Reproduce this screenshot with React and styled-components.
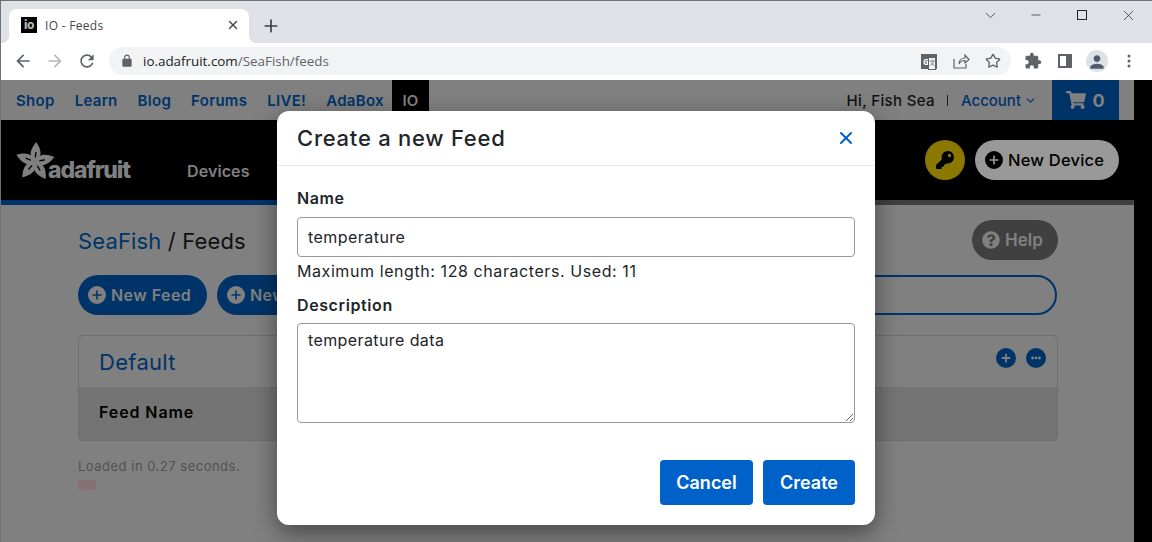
import React from "react";
import styled, { createGlobalStyle } from "styled-components";
import { FaShoppingCart, FaKey, FaQuestionCircle, FaPlus, FaEllipsisH } from "react-icons/fa";
import { X, Plus, Star, ChevronDown, Minus } from "lucide-react";

const UI = `Inter, "Liberation Sans", sans-serif`;
const CHROME = `"Open Sans", "Liberation Sans", sans-serif`;

const Global = createGlobalStyle`
  html, body { margin: 0; padding: 0; background: #000; }
  * { box-sizing: border-box; }
`;

const Win = styled.div`
  width: 1152px; height: 542px; overflow: hidden; display: flex; flex-direction: column;
  border-top: 1px solid #6f7173; border-left: 1px solid #6f7173; font-family: ${UI};
`;
const TabStrip = styled.div`
  height: 42px; flex: none; background: #dee1e6; display: flex; align-items: flex-end; padding-left: 8px; color: #3c4043;
`;
const Tab = styled.div`
  position: relative; width: 240px; height: 34px; background: #fff; border-radius: 8px 8px 0 0;
  display: flex; align-items: center; padding: 0 9px 2px 12px; font: 12px ${CHROME}; color: #45474a;
  &::before, &::after { content: ""; position: absolute; bottom: 0; width: 8px; height: 8px; }
  &::before { left: -8px; background: radial-gradient(circle at 0 0, #dee1e6 8px, #fff 8.5px); }
  &::after { right: -8px; background: radial-gradient(circle at 100% 0, #dee1e6 8px, #fff 8.5px); }
`;
const Favicon = styled.div`
  width: 16px; height: 16px; background: #000; color: #b5b5b5; font: 800 12px/15px ${UI}; text-align: center; margin-right: 8px; letter-spacing: -.5px;
`;
const TabTitle = styled.span`flex: 1; letter-spacing: .3px;`;
const NewTab = styled.div`margin-left: 12px; margin-bottom: 7px; display: flex; width: 20px; height: 20px; color: #3c4043;`;
const WinControls = styled.div`
  margin-left: auto; align-self: flex-start; display: flex; align-items: center; height: 28px; margin-right: 1px; color: #222;
`;
const WinBtn = styled.div`width: 46px; display: flex; justify-content: center; align-items: center;`;
const MaxBox = styled.div`width: 10px; height: 10px; border: 1px solid #222;`;
const Toolbar = styled.div`
  height: 37px; flex: none; background: #fff; display: flex; align-items: center; padding: 0 0 1px 6px;
`;
const NavBtn = styled.div`
  width: 32px; display: flex; justify-content: center; align-items: center; color: ${p => p.$off ? "#b5b7ba" : "#5f6368"};
`;
const Omnibox = styled.div`
  width: 902px; height: 28px; margin-left: 6px; border-radius: 14px; background: #f1f3f4; display: flex; align-items: center;
  padding: 0 2px 0 11px; color: #5f6368;
`;
const Url = styled.div`font: 13.4px ${CHROME}; color: #5f6368; margin-left: 9px; flex: 1;`;
const UrlHost = styled.span`color: #202124;`;
const OmniIcon = styled.div`width: 32px; display: flex; justify-content: center; align-items: center; color: #5f6368;`;
const TranslateBox = styled.div`
  position: relative; width: 16px; height: 15px; background: #5f6368; color: #fff; font: 700 8px/15px ${CHROME}; padding-left: 2px;
`;
const TranslateBack = styled.span`
  position: absolute; left: 7px; top: 3px; width: 8px; height: 13px; background: #f1f3f4; border: 1px solid #5f6368; color: #5f6368; font: 7px/10px ${CHROME}; text-align: center;
`;
const ToolIcons = styled.div`display: flex; align-items: center; margin-left: 6px;`;
const ToolBtn = styled.div`width: 32px; display: flex; justify-content: center; align-items: center; color: #5f6368;`;
const Avatar = styled.div`
  width: 22px; height: 22px; border-radius: 50%; background: #dee1e6; display: flex; align-items: flex-end; justify-content: center; color: #52596a;
`;

const Page = styled.div`position: relative; flex: 1; display: flex; min-height: 0; background: #000;`;
const Main = styled.div`width: 1133px; flex: none; background: #d5d5d5; display: flex; flex-direction: column;`;
const Overlay = styled.div`position: absolute; inset: 0; background: rgba(0,0,0,.4);`;

const TopNav = styled.div`height: 40px; flex: none; display: flex; align-items: center; padding-left: 15px;`;
const NavLink = styled.a`
  font-size: 15px; font-weight: 600; color: #0058b0; margin-right: 20px; letter-spacing: .3px; white-space: nowrap;
`;
const IoTab = styled.div`
  width: 37px; height: 40px; background: #000; color: #d5d5d5; font-size: 15px; font-weight: 600; margin-left: -12px;
  display: flex; align-items: center; justify-content: center;
`;
const TopRight = styled.div`margin-left: auto; display: flex; align-items: center; height: 100%; margin-right: 15px;`;
const Hello = styled.span`font-size: 15px; font-weight: 500; color: #1c1c1c; letter-spacing: .35px;`;
const Sep = styled.span`width: 1px; height: 11px; background: #333; margin: 0 13px 0 12px;`;
const Account = styled.span`font-size: 15px; font-weight: 500; color: #0058b0; display: flex; align-items: center; gap: 3px; margin-right: 15px;`;
const Cart = styled.div`
  width: 67px; height: 40px; background: #0058b0; color: #d5d5d5; display: flex; align-items: center; justify-content: center; gap: 6px;
  font-size: 18px; font-weight: 700;
`;

const Header = styled.div`height: 80px; flex: none; background: #000; display: flex; align-items: center; padding: 0 15px 0 14px;`;
const Logo = styled.div`display: flex; align-items: flex-end; width: 116px; height: 40px; color: #d5d5d5; margin-top: 1px;`;
const LogoText = styled.span`
  font-size: 23px; font-weight: 800; letter-spacing: -1.1px; line-height: 22px; margin-left: -7px; color: #d5d5d5;
`;
const Devices = styled.a`margin-left: 56px; margin-top: 22px; font-size: 16px; font-weight: 600; letter-spacing: .1px; color: #d5d5d5;`;
const HeaderRight = styled.div`margin-left: auto; display: flex; align-items: center; gap: 10px;`;
const KeyBtn = styled.div`
  width: 40px; height: 40px; border-radius: 50%; background: #e6c800; color: #000; display: flex; align-items: center; justify-content: center;
`;
const NewDevice = styled.div`
  width: 144px; height: 40px; border-radius: 20px; background: #fff; color: #000; display: flex; align-items: center; gap: 5px; padding-left: 10px;
  font-size: 16.5px; font-weight: 500; letter-spacing: .2px; white-space: nowrap;
`;
const Stripe = styled.div`height: 5px; flex: none; background: linear-gradient(to right, #0058b0 0 60%, #6b6b6b 60%);`;

const Content = styled.div`flex: 1; padding: 15px 76px 0 77px; display: flex; flex-direction: column;`;
const TitleRow = styled.div`height: 40px; display: flex; align-items: center; justify-content: space-between;`;
const Crumb = styled.h1`margin: 2px 0 0; font-size: 22px; font-weight: 400; color: #1c1c1c; letter-spacing: .15px; white-space: nowrap;`;
const CrumbLink = styled.span`color: #0058b0;`;
const HelpBtn = styled.div`
  width: 86px; height: 40px; border-radius: 20px; background: #6b6b6b; color: #d5d5d5; display: flex; align-items: center; gap: 5px; padding-left: 10px;
  font-size: 17px; font-weight: 600;
`;
const ActionRow = styled.div`margin: 15px 1px 0 0; height: 40px; display: flex; gap: 10px;`;
const PillBtn = styled.div`
  width: 129px; height: 40px; flex: none; overflow: hidden; border-radius: 20px; background: #0058b0; color: #d5d5d5; display: flex; align-items: center; gap: 5px; padding-left: 10px;
  font-size: 16px; font-weight: 600; letter-spacing: .45px; white-space: nowrap;
`;
const Search = styled.div`flex: 1; height: 40px; border: 2px solid #0058b0; border-radius: 20px;`;
const Card = styled.div`margin-top: 20px; border: 1px solid #b9b9b9; border-radius: 4px; height: 106px; display: flex; flex-direction: column;`;
const CardHead = styled.div`height: 51px; display: flex; align-items: center; padding: 0 11px 0 20px; justify-content: space-between;`;
const CardTitle = styled.h2`margin: 0; font-size: 22px; font-weight: 400; letter-spacing: .3px; color: #0058b0;`;
const CardIcons = styled.div`display: flex; gap: 10px; margin-top: -8px;`;
const RoundIcon = styled.div`
  width: 20px; height: 20px; border-radius: 50%; background: #0058b0; color: #d5d5d5; display: flex; align-items: center; justify-content: center;
`;
const CardRow = styled.div`flex: 1; background: #c2c2c2; display: flex; align-items: center; padding: 0 20px 4px; font-size: 16px; font-weight: 600; letter-spacing: .9px; color: #000; border-radius: 0 0 4px 4px;`;
const Loaded = styled.div`margin-top: 17px; font-size: 13px; color: #8a8a8a; letter-spacing: .5px;`;
const Tag = styled.div`margin-top: 6px; width: 18px; height: 10px; border-radius: 2px; background: #e2bcc3;`;

const Modal = styled.div`
  position: absolute; left: 276px; top: 31px; width: 598px; height: 414px; background: #fff; border-radius: 12px;
  box-shadow: 0 8px 24px rgba(0,0,0,.45); display: flex; flex-direction: column; color: #212529;
`;
const ModalHead = styled.div`
  height: 55px; flex: none; border-bottom: 1px solid #e6e6e6; display: flex; align-items: center; justify-content: space-between; padding: 0 19px 0 20px;
`;
const ModalTitle = styled.h3`margin: 0; font-size: 22px; font-weight: 500; letter-spacing: .75px; color: #212529;`;
const Close = styled.div`color: #0062c8; display: flex;`;
const ModalBody = styled.div`padding: 22px 20px 20px; flex: 1; display: flex; flex-direction: column;`;
const Label = styled.label`font-size: 16px; font-weight: 600; line-height: 20px; letter-spacing: .6px; color: #212529;`;
const NameInput = styled.input`
  margin-top: 9px; width: 100%; height: 40px; border: 1px solid #989898; border-radius: 4px; padding: 0 10px; font: 400 16px ${UI}; letter-spacing: .45px; color: #212529; background: #fff; outline: none;
`;
const Hint = styled.div`font-size: 16px; line-height: 20px; margin: 4px 0 14px; letter-spacing: .58px; color: #212529;`;
const DescArea = styled.textarea`
  display: block; margin-top: 8px; width: 100%; height: 100px; border: 1px solid #989898; border-radius: 4px; padding: 6px 10px; font: 400 16px ${UI}; letter-spacing: .4px; color: #212529; background: #fff; outline: none; resize: vertical;
`;
const ModalFoot = styled.div`margin-top: auto; display: flex; justify-content: flex-end; gap: 10px;`;
const Primary = styled.button`
  height: 45px; width: ${p => p.$w}px; border: 0; border-radius: 4px; background: #0062c8; color: #fff; font: 600 18px ${UI}; padding: 0 0 1px;
`;

const Glyph = ({ d, size = 24, ...rest }) => (
  <svg width={size} height={size} viewBox="0 0 24 24" fill="currentColor" {...rest}><path d={d} /></svg>
);
const PlusDisc = ({ size = 18 }) => (
  <svg width={size} height={size} viewBox="0 0 18 18" fill="currentColor">
    <path fillRule="evenodd" d="M9 0a9 9 0 1 1 0 18A9 9 0 0 1 9 0zM8.200 4.500v3.700H4.500v1.600h3.700v3.700h1.600V9.800h3.700V8.200H9.800V4.500z" />
  </svg>
);
const AdafruitStar = () => (
  <svg width="40" height="40" viewBox="-20 -21 40 40" fill="currentColor">
    {[0, 1, 2, 3, 4].map(k => (
      <g key={k} transform={`rotate(${5 + 72 * k})`}>
        <path d="M0 0C-7 -5 -6.500 -11 -.5 -20C6 -12 7 -5 0 0z" />
        <path d="M0 -4.500V-10" stroke="#000" strokeWidth="1.300" fill="none" />
      </g>
    ))}
  </svg>
);

export default function App() {
  return (
    <>
      <Global />
      <Win>
        <TabStrip>
          <Tab>
            <Favicon>io</Favicon>
            <TabTitle>IO - Feeds</TabTitle>
            <X size={14} strokeWidth={2.4} />
          </Tab>
          <NewTab><Plus size={20} strokeWidth={2} /></NewTab>
          <WinControls>
            <WinBtn><ChevronDown size={17} strokeWidth={1} /></WinBtn>
            <WinBtn><Minus size={14} strokeWidth={1.2} /></WinBtn>
            <WinBtn><MaxBox /></WinBtn>
            <WinBtn><X size={17} strokeWidth={1} /></WinBtn>
          </WinControls>
        </TabStrip>
        <Toolbar>
          <NavBtn><Glyph size={20} d="M20 11H7.830l5.590-5.590L12 4l-8 8 8 8 1.410-1.410L7.830 13H20v-2z" /></NavBtn>
          <NavBtn $off><Glyph size={20} d="M12 4l-1.410 1.410L16.170 11H4v2h12.170l-5.580 5.590L12 20l8-8z" /></NavBtn>
          <NavBtn><Glyph size={20} d="M17.650 6.350C16.200 4.900 14.210 4 12 4c-4.420 0-7.990 3.580-7.990 8s3.570 8 7.990 8c3.730 0 6.840-2.550 7.730-6h-2.080c-.82 2.330-3.040 4-5.650 4-3.310 0-6-2.690-6-6s2.690-6 6-6c1.660 0 3.140.69 4.220 1.780L13 11h7V4l-2.350 2.350z" /></NavBtn>
          <Omnibox>
            <Glyph size={14} d="M18 8h-1V6c0-2.760-2.240-5-5-5S7 3.240 7 6v2H6c-1.100 0-2 .9-2 2v10c0 1.100.9 2 2 2h12c1.100 0 2-.9 2-2V10c0-1.100-.9-2-2-2zM9 6c0-1.660 1.340-3 3-3s3 1.340 3 3v2H9V6z" />
            <Url><UrlHost>io.adafruit.com</UrlHost>/SeaFish/feeds</Url>
            <OmniIcon><TranslateBox>G<TranslateBack>文</TranslateBack></TranslateBox></OmniIcon>
            <OmniIcon>
              <svg width="17" height="16" viewBox="0 0 17 16" fill="none" stroke="currentColor" strokeWidth="1.2">
                <path d="M1 6v9h12v-4M6 11c0-4 3-6 6-6V2l4 4.500L12 10V7.500c-3 0-5 1-6 3.500z" />
              </svg>
            </OmniIcon>
            <OmniIcon><Star size={16} strokeWidth={2} /></OmniIcon>
          </Omnibox>
          <ToolIcons>
            <ToolBtn><Glyph size={18} d="M20.500 11H19V7c0-1.100-.9-2-2-2h-4V3.500C13 2.120 11.880 1 10.500 1S8 2.120 8 3.500V5H4c-1.100 0-1.990.9-1.990 2v3.800H3.500c1.490 0 2.700 1.210 2.700 2.700s-1.210 2.700-2.700 2.700H2V20c0 1.100.9 2 2 2h3.800v-1.500c0-1.490 1.210-2.700 2.700-2.700 1.490 0 2.700 1.210 2.700 2.700V22H17c1.100 0 2-.9 2-2v-4h1.500c1.380 0 2.500-1.120 2.500-2.500S21.880 11 20.500 11z" /></ToolBtn>
            <ToolBtn>
              <svg width="14" height="14" viewBox="0 0 14 14"><path fill="#5f6368" d="M0 0h14v14H0z" /><path fill="#fff" d="M2 2h6v10H2z" /></svg>
            </ToolBtn>
            <ToolBtn><Avatar><Glyph size={20} d="M12 12c2.210 0 4-1.790 4-4s-1.790-4-4-4-4 1.790-4 4 1.790 4 4 4zm0 2c-2.670 0-8 1.340-8 4v2h16v-2c0-2.660-5.330-4-8-4z" /></Avatar></ToolBtn>
            <ToolBtn>
              <svg width="4" height="14" viewBox="0 0 4 14" fill="currentColor"><circle cx="2" cy="2" r="1.500" /><circle cx="2" cy="7" r="1.500" /><circle cx="2" cy="12" r="1.500" /></svg>
            </ToolBtn>
          </ToolIcons>
        </Toolbar>
        <Page>
          <Main>
            <TopNav>
              <NavLink>Shop</NavLink>
              <NavLink>Learn</NavLink>
              <NavLink>Blog</NavLink>
              <NavLink>Forums</NavLink>
              <NavLink>LIVE!</NavLink>
              <NavLink>AdaBox</NavLink>
              <IoTab>IO</IoTab>
              <TopRight>
                <Hello>Hi, Fish Sea</Hello>
                <Sep />
                <Account>Account <ChevronDown size={13} strokeWidth={2} /></Account>
                <Cart><FaShoppingCart size={20} />0</Cart>
              </TopRight>
            </TopNav>
            <Header>
              <Logo><AdafruitStar /><LogoText>adafruit</LogoText></Logo>
              <Devices>Devices</Devices>
              <HeaderRight>
                <KeyBtn><FaKey size={18} /></KeyBtn>
                <NewDevice><PlusDisc />New Device</NewDevice>
              </HeaderRight>
            </Header>
            <Stripe />
            <Content>
              <TitleRow>
                <Crumb><CrumbLink>SeaFish</CrumbLink> / Feeds</Crumb>
                <HelpBtn><FaQuestionCircle size={18} />Help</HelpBtn>
              </TitleRow>
              <ActionRow>
                <PillBtn><PlusDisc />New Feed</PillBtn>
                <PillBtn><PlusDisc />New Group</PillBtn>
                <Search />
              </ActionRow>
              <Card>
                <CardHead>
                  <CardTitle>Default</CardTitle>
                  <CardIcons>
                    <RoundIcon><FaPlus size={10} /></RoundIcon>
                    <RoundIcon><FaEllipsisH size={10} /></RoundIcon>
                  </CardIcons>
                </CardHead>
                <CardRow>Feed Name</CardRow>
              </Card>
              <Loaded>Loaded in 0.27 seconds.</Loaded>
              <Tag />
            </Content>
          </Main>
          <Overlay />
          <Modal>
            <ModalHead>
              <ModalTitle>Create a new Feed</ModalTitle>
              <Close><X size={20} strokeWidth={2.4} /></Close>
            </ModalHead>
            <ModalBody>
              <Label>Name</Label>
              <NameInput defaultValue="temperature" />
              <Hint>Maximum length: 128 characters. Used: 11</Hint>
              <Label>Description</Label>
              <DescArea defaultValue="temperature data" />
              <ModalFoot>
                <Primary $w={93}>Cancel</Primary>
                <Primary $w={92}>Create</Primary>
              </ModalFoot>
            </ModalBody>
          </Modal>
        </Page>
      </Win>
    </>
  );
}
